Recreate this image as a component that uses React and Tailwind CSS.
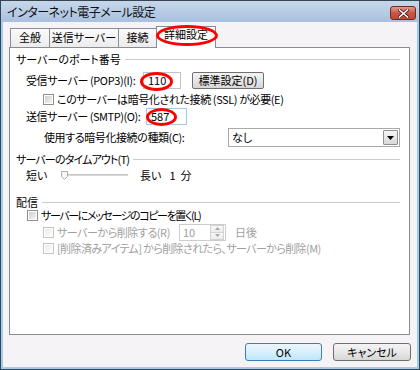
import React from "react";

const font = "font-['Noto_Sans_CJK_JP','Noto_Sans_CJK_SC',sans-serif] [font-feature-settings:'palt']";

function CheckBox({ disabled }) {
  return (
    <span
      className={
        "w-[11px] h-[11px] shrink-0 border p-[1px] bg-white " +
        (disabled ? "border-[#c4c4c4]" : "border-[#8e8f8f]")
      }
    >
      <span
        className={
          "block w-full h-full bg-gradient-to-br " +
          (disabled ? "from-[#ececec] to-[#fbfbfb]" : "from-[#cfcfcf] to-[#f4f4f4]")
        }
      ></span>
    </span>
  );
}

function GroupHeader({ title, height, tracking }) {
  return (
    <div className={"flex items-center pl-[6px] pr-[9px] " + height}>
      <span className={"whitespace-nowrap " + (tracking || "")}>{title}</span>
      <span className="flex-1 h-px bg-[#c9ccd0] ml-[4px]"></span>
    </div>
  );
}

function Ellipse({ className }) {
  return (
    <span
      className={
        "absolute rounded-[50%] border-[3px] border-[#ff0000] pointer-events-none " + className
      }
    ></span>
  );
}

function Tab({ label, width, selected, children }) {
  return selected ? (
    <div
      className={
        "relative z-10 h-[22px] bg-white border border-b-0 border-[#898c95] -ml-px flex items-start justify-center pt-[2px] " +
        width
      }
    >
      {label}
      {children}
    </div>
  ) : (
    <div
      className={
        "h-[20px] bg-gradient-to-b from-[#fafafa] to-[#ececec] border border-[#898c95] -ml-px first:ml-0 flex items-center justify-center pb-[1px] " +
        width
      }
    >
      {label}
    </div>
  );
}

export default function App() {
  return (
    <div className={"w-[420px] h-[370px] border border-[#3a4350] bg-[#9fcdef] flex flex-col text-[11px] text-black leading-none " + font}>
      {/* title bar */}
      <div className="h-[21px] bg-gradient-to-b from-[#c6d7eb] to-[#a9c1df] flex items-center justify-between pl-[6px] pr-[3px]">
        <span className="text-[12px] text-[#111] pt-[1px] tracking-[-0.5px]">インターネット電子メール設定</span>
        <div className="w-[26px] h-[14px] mt-[3px] rounded-[3px] border border-[#6f2a22] bg-gradient-to-b from-[#e29a8d] via-[#c95545] to-[#c0493a] flex items-center justify-center">
          <svg width="11" height="9" viewBox="0 0 11 9">
            <path d="M1.5 1 L9.5 8 M9.5 1 L1.5 8" stroke="#3d1713" strokeWidth="3" strokeLinecap="square" />
            <path d="M1.5 1 L9.5 8 M9.5 1 L1.5 8" stroke="#ffffff" strokeWidth="1.6" strokeLinecap="square" />
          </svg>
        </div>
      </div>

      {/* body */}
      <div className="flex-1 mx-[2px] mb-[2px] bg-[#f6f3f6] flex flex-col">
        <div className="h-[22px] mt-[4px] -mb-px flex items-end pl-[7px]">
          <Tab label="全般" width="w-[40px]" />
          <Tab label="送信サーバー" width="w-[70px]" />
          <Tab label="接続" width="w-[39px]" />
          <Tab label="詳細設定" width="w-[60px]" selected>
            <Ellipse className="-left-[1px] -top-[2px] w-[62px] h-[21px]" />
          </Tab>
        </div>

        {/* panel */}
        <div className="ml-[6px] w-[401px] h-[288px] bg-white border border-[#898c95] flex flex-col">
          <GroupHeader title="サーバーのポート番号" height="h-[22px]" />

          <div className="h-[20px] flex items-center pl-[16px]">
            <span className="w-[117px] whitespace-nowrap tracking-[-0.4px]">受信サーバー (POP3)(I):</span>
            <div className="relative w-[38px] h-[17px] border border-[#bfc4c9] bg-white flex items-center pl-[4px]">
              110
              <Ellipse className="-left-[4px] -top-[1px] w-[33px] h-[19px]" />
            </div>
            <div className="ml-[11px] w-[72px] h-[17px] rounded-[2px] border border-[#707070] bg-gradient-to-b from-[#f4f4f4] via-[#e6e6e6] to-[#d6d6d6] flex items-center justify-center">
              標準設定(D)
            </div>
          </div>

          <div className="h-[18px] flex items-center pl-[33px]">
            <CheckBox />
            <span className="ml-[3px] whitespace-nowrap tracking-[-0.4px]">このサーバーは暗号化された接続 (SSL) が必要(E)</span>
          </div>

          <div className="h-[17px] flex items-center pl-[16px]">
            <span className="w-[120px] whitespace-nowrap tracking-[-0.45px]">送信サーバー (SMTP)(O):</span>
            <div className="relative w-[41px] h-[17px] border border-[#a5c6e6] bg-white flex items-center pl-[4px]">
              587
              <Ellipse className="-left-[1px] -top-[1px] w-[31px] h-[18px]" />
            </div>
          </div>

          <div className="h-[25px] flex items-center pl-[34px]">
            <span className="w-[184px] whitespace-nowrap tracking-[-0.4px]">使用する暗号化接続の種類(C):</span>
            <div className="w-[172px] h-[19px] border border-[#a9a9a9] bg-white flex items-center justify-between pl-[3px] pr-[1px]">
              <span>なし</span>
              <div className="w-[15px] h-[15px] border border-[#8f8f8f] rounded-[1px] bg-gradient-to-b from-[#f6f6f6] to-[#d8d8d8] flex items-center justify-center">
                <svg width="7" height="4" viewBox="0 0 7 4">
                  <path d="M0 0 H7 L3.5 4 Z" fill="#000" />
                </svg>
              </div>
            </div>
          </div>

          <GroupHeader title="サーバーのタイムアウト(T)" height="h-[18px]" tracking="tracking-[-0.85px]" />

          <div className="h-[14px] flex items-center pl-[16px]">
            <span className="w-[34px]">短い</span>
            <div className="relative w-[68px] h-[10px] flex items-center">
              <span className="ml-[5px] flex-1 h-[2px] bg-[#dadada] border-t border-[#c4c4c4]"></span>
              <svg className="absolute left-0 top-[1px]" width="9" height="9" viewBox="0 0 9 9">
                <path d="M1.5 0.5 H7.5 V5.5 L4.5 8.5 L1.5 5.5 Z" fill="#f7f7f7" stroke="#b0b0b0" />
              </svg>
            </div>
            <span className="ml-[12px]">長い</span>
            <span className="ml-[8px]">1</span>
            <span className="ml-[5px]">分</span>
          </div>

          <div className="h-[14px]"></div>
          <GroupHeader title="配信" height="h-[12px]" />

          <div className="h-[14px] flex items-center pl-[17px]">
            <CheckBox />
            <span className="ml-[3px] whitespace-nowrap tracking-[-1.4px]">サーバーにメッセージのコピーを置く(L)</span>
          </div>

          <div className="h-[20px] flex items-center pl-[33px] text-[#a0a0a0]">
            <CheckBox disabled />
            <span className="ml-[3px] w-[122px] whitespace-nowrap tracking-[-0.45px]">サーバーから削除する(R)</span>
            <div className="w-[47px] h-[17px] border border-[#c9cdd1] bg-white flex items-center justify-between pl-[3px] pr-[1px]">
              <span>10</span>
              <div className="w-[14px] h-[15px] flex flex-col">
                <div className="flex-1 border border-[#d2d2d2] bg-gradient-to-b from-[#fafafa] to-[#ebebeb] flex items-center justify-center">
                  <svg width="5" height="3" viewBox="0 0 5 3"><path d="M0 3 L2.5 0 L5 3 Z" fill="#a8a8a8" /></svg>
                </div>
                <div className="flex-1 border border-t-0 border-[#d2d2d2] bg-gradient-to-b from-[#fafafa] to-[#ebebeb] flex items-center justify-center">
                  <svg width="5" height="3" viewBox="0 0 5 3"><path d="M0 0 L2.5 3 L5 0 Z" fill="#a8a8a8" /></svg>
                </div>
              </div>
            </div>
            <span className="ml-[9px]">日後</span>
          </div>

          <div className="h-[12px] flex items-center pl-[33px] text-[#a0a0a0]">
            <CheckBox disabled />
            <span className="ml-[3px] whitespace-nowrap tracking-[-0.6px]">[削除済みアイテム] から削除されたら、サーバーから削除(M)</span>
          </div>
        </div>

        {/* buttons */}
        <div className="mt-[8px] flex justify-end gap-[11px] pr-[6px]">
          <div className="w-[77px] h-[18px] rounded-[3px] border border-[#3c7fb1] bg-gradient-to-b from-[#eaf6fd] via-[#d9f0fc] to-[#bee6fd] flex items-center justify-center">
            OK
          </div>
          <div className="w-[78px] h-[18px] rounded-[3px] border border-[#707070] bg-gradient-to-b from-[#f4f4f4] via-[#e8e8e8] to-[#d6d6d6] flex items-center justify-center">
            キャンセル
          </div>
        </div>
      </div>
    </div>
  );
}
